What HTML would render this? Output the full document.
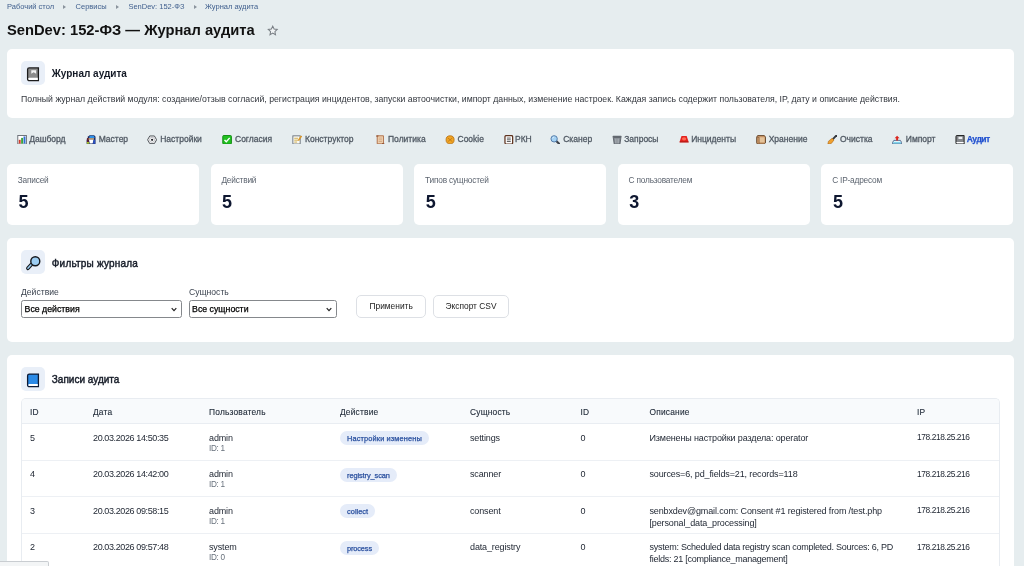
<!DOCTYPE html>
<html lang="ru"><head><meta charset="utf-8">
<title>SenDev: 152-ФЗ — Журнал аудита</title>
<style>
*{box-sizing:border-box}
html,body{margin:0;padding:0}
body{width:1024px;height:566px;overflow:hidden;background:#e6edef;font-family:"Liberation Sans",Arial,sans-serif;color:#111;position:relative}
.a{position:absolute;white-space:nowrap}
.bc{top:2px;font-size:7.5px;color:#41608e;line-height:10px}
.ar{position:absolute;top:4.5px;width:0;height:0;border-left:3px solid #8a939c;border-top:2.5px solid transparent;border-bottom:2.5px solid transparent}
h1{position:absolute;left:7px;top:20px;margin:0;font-size:14.72px;line-height:20px;font-weight:bold;color:#111;white-space:nowrap}
.star{position:absolute;left:267px;top:24.5px;width:11.5px;height:11px}
.card{position:absolute;left:7px;width:1006.5px;background:#fff;border-radius:5px}
.ic{position:absolute;left:14px;width:24px;height:24px;border-radius:5px;background:#e9eff8}
.ic svg{position:absolute;left:0;top:.5px;width:24px;height:24px}
.ct{position:absolute;left:44.8px;font-size:10px;font-weight:bold;color:#141a26;white-space:nowrap;line-height:12px}
.tab{position:absolute;top:133.3px;line-height:12px;font-size:8.5px;color:#525b65;white-space:nowrap;-webkit-text-stroke:.3px #525b65}
.ti{position:absolute;top:134.8px;width:10.2px;height:9.6px}
.st{position:absolute;top:163.7px;width:192px;height:61.3px;background:#fff;border-radius:5px}
.st .l{position:absolute;left:10.8px;top:11.5px;font-size:8.3px;line-height:11px;color:#5d6570;white-space:nowrap;letter-spacing:-.2px}
.st .v{position:absolute;left:11.5px;top:28.8px;font-size:18px;line-height:20px;font-weight:bold;color:#0e1730}
.lb{position:absolute;font-size:8.6px;line-height:11px;color:#3c4450;white-space:nowrap}
.sel{position:absolute;top:299.5px;height:18.3px;border:1px solid #85888c;border-radius:2.5px;background:#fff;font-size:8.75px;line-height:16.5px;padding-left:2.6px;color:#000;white-space:nowrap;-webkit-text-stroke:.25px #000}
.sel svg{position:absolute;right:3.5px;top:6px;width:6px;height:5px}
.btn{position:absolute;top:294.7px;height:23.2px;border:1px solid #dde0e5;border-radius:5px;background:#fff;font-size:8.4px;line-height:21.5px;text-align:center;color:#222;white-space:nowrap}
.tbl{position:absolute;left:14px;top:43.2px;width:978.5px;height:200px;border:1px solid #e8ecf1;border-radius:5px 5px 0 0;border-bottom:0;overflow:hidden}
.th{position:absolute;left:0;top:0;right:0;height:24.7px;background:#f8fafc;border-bottom:1px solid #e9edf2}
.th span{position:absolute;top:7.9px;font-size:8.4px;line-height:11px;color:#222c3a;white-space:nowrap;letter-spacing:.2px;-webkit-text-stroke:.1px #222c3a}
.tr{position:absolute;left:0;right:0;height:36.5px;border-bottom:1px solid #edf0f4}
.tr span{position:absolute;top:7.5px;font-size:9px;line-height:12px;color:#1d2430;white-space:nowrap;letter-spacing:-.13px}
.tr .s{top:19.7px;font-size:8.2px;line-height:10px;color:#68717c;letter-spacing:-.32px}
.tr .ip{font-size:8.4px;top:7.1px;letter-spacing:-.4px}
.tr .c2{letter-spacing:-.38px}
.tr .p{top:7.3px;left:318px;height:14px;border-radius:7px;background:#e5ecf9;color:#2a509f;font-size:7.4px;line-height:13.6px;padding:1.1px 7.1px 0;letter-spacing:0;-webkit-text-stroke:.25px #2a509f}
.c1{left:8px}.c2{left:71px}.c3{left:187px}.c4{left:318px}.c5{left:448px}.c6{left:558.5px}.c7{left:627.5px}.c8{left:895px}
</style></head><body>
<div id="w" style="position:absolute;left:0;top:0;width:1024px;height:566px;will-change:transform">
<div class="a bc" style="left:7px">Рабочий стол</div><i class="ar" style="left:63px"></i>
<div class="a bc" style="left:75.6px">Сервисы</div><i class="ar" style="left:116px"></i>
<div class="a bc" style="left:128.4px">SenDev: 152-ФЗ</div><i class="ar" style="left:193.5px"></i>
<div class="a bc" style="left:205px">Журнал аудита</div>
<h1>SenDev: 152-ФЗ — Журнал аудита</h1>
<svg class="star" viewBox="0 0 24 24"><path d="M12 2.5l2.9 6.3 6.8.8-5 4.7 1.3 6.8-6-3.4-6 3.4 1.3-6.8-5-4.7 6.8-.8z" fill="#f1f4f5" stroke="#777d83" stroke-width="2.2"/></svg>

<div class="card" style="top:49px;height:69.2px">
 <div class="ic" style="top:12.4px"><svg viewBox="0 0 24 24"><path d="M8.2 5.9h9.2v12.8H8.4a1.8 1.8 0 0 1-1.8-1.8V7.5a1.6 1.6 0 0 1 1.6-1.6z" fill="#8b8b8b" stroke="#1c1c1c" stroke-width="1.3"/><path d="M7.2 16.8c.2-.9.8-1.1 1.6-1.1h8v2.4h-8c-.9 0-1.5-.4-1.6-1.3z" fill="#fff"/><path d="M10.3 8.3h4.8v3.4l-2.4-1.5-2.4 1.5z" fill="#f4f4f4"/></svg></div>
 <div class="ct" style="top:18.5px">Журнал аудита</div>
 <div class="a" style="left:14px;top:45px;font-size:8.727px;line-height:11px;color:#32363d">Полный журнал действий модуля: создание/отзыв согласий, регистрация инцидентов, запуски автоочистки, импорт данных, изменение настроек. Каждая запись содержит пользователя, IP, дату и описание действия.</div>
</div>

<!-- tabs -->
<div id="tabs"><svg class="ti" style="left:17px" viewBox="0 0 10 10"><rect x=".5" y=".5" width="9" height="9" fill="#fff" stroke="#6b7078"/><rect x="1.5" y="5" width="2" height="4" fill="#d23a2a"/><rect x="4" y="3" width="2" height="6" fill="#3aa43a"/><rect x="6.5" y="1.5" width="2" height="7.5" fill="#2f6fd0"/></svg>
<div class="tab" style="left:29.2px">Дашборд</div>
<svg class="ti" style="left:85.5px" viewBox="0 0 10 10"><path d="M2.2 1.2L3.6.2h4.6l1.4 1.6v7.6H.4V5.2z" fill="#14235a"/><path d="M3.2 1.6L4 .9h3.8l.9 1.4-.3 1.1H3z" fill="#2f8fe6"/><path d="M.6 4l1.2-1.4.8.4v4.6H.6z" fill="#5e1a2e"/><rect x="2.4" y="3.4" width="5.6" height="1.5" fill="#e9b36e"/><path d="M2.8 4.9h4.9L6.6 8.8H3.6z" fill="#fff"/><path d="M7.7 4.6l1.5.6v4H6.9z" fill="#2b52c4"/><path d="M.6 7.4h2l.8 1.8H.6z" fill="#a9c62a"/></svg>
<div class="tab" style="left:98.7px">Мастер</div>
<svg class="ti" style="left:147px" viewBox="0 0 10 10"><path d="M2.6 1h4.8L9.7 5 7.4 9H2.6L.3 5z" fill="#f4f4f4" stroke="#4c5056" stroke-width="1" stroke-linejoin="round"/><circle cx="5" cy="5" r="2.6" fill="#fff" stroke="#9a9ea4" stroke-width=".6"/><circle cx="5" cy="5" r="1.2" fill="#1e2126"/></svg>
<div class="tab" style="left:160.2px">Настройки</div>
<svg class="ti" style="left:221.7px" viewBox="0 0 10 10"><rect x=".5" y=".5" width="9" height="9" rx="1" fill="#21c021" stroke="#128a12"/><path d="M2.3 5.1l1.9 1.9 3.5-4" fill="none" stroke="#fff" stroke-width="1.5"/></svg>
<div class="tab" style="left:235px">Согласия</div>
<svg class="ti" style="left:292px" viewBox="0 0 10 10"><rect x=".6" y=".9" width="7.600" height="8.500" fill="#fbfbf5" stroke="#5f6872" stroke-width=".9"/><rect x="2" y="2.900" width="4" height=".9" fill="#c9a23a"/><rect x="2" y="4.900" width="4" height=".9" fill="#c9a23a"/><rect x="2" y="6.900" width="3" height=".9" fill="#c9a23a"/><path d="M9.600.9L6.300 5.900" stroke="#d9962a" stroke-width="1.700"/></svg>
<div class="tab" style="left:305px">Конструктор</div>
<svg class="ti" style="left:375px" viewBox="0 0 10 10"><path d="M2 .8h6.5v8.4H2z" fill="#f0d2b0" stroke="#a8623a" stroke-width=".9"/><path d="M.8 1h2.4M7 9.2h2.4" stroke="#8a4a2a" stroke-width="1.2"/><path d="M3.5 3.2h3.5M3.5 5h3.5M3.5 6.8h3.5" stroke="#c89a78" stroke-width=".7"/></svg>
<div class="tab" style="left:388px">Политика</div>
<svg class="ti" style="left:445px" viewBox="0 0 10 10"><circle cx="5" cy="5" r="4.2" fill="#f2a522" stroke="#b8741a" stroke-width=".9"/><path d="M2.6 3l4.8 4M7.4 3L2.6 7" stroke="#b8741a" stroke-width=".8"/></svg>
<div class="tab" style="left:457.5px">Cookie</div>
<svg class="ti" style="left:503.7px" viewBox="0 0 10 10"><rect x=".7" y=".6" width="8" height="8.8" rx="1.2" fill="#fff" stroke="#5e321e" stroke-width="1.3"/><path d="M2.700 3.200h4M2.700 5h4M2.700 6.800h4" stroke="#444" stroke-width=".9"/></svg>
<div class="tab" style="left:515px">РКН</div>
<svg class="ti" style="left:550px" viewBox="0 0 10 10"><path d="M6.200 6.200l3 2.900" stroke="#3f444c" stroke-width="2.300" stroke-linecap="round"/><circle cx="4" cy="4" r="3.300" fill="#a5d2f4" stroke="#4f78a6" stroke-width="1"/><path d="M2.300 3.600a1.900 1.900 0 0 1 1.700-1.500" stroke="#e8f4fc" stroke-width=".8" fill="none"/></svg>
<div class="tab" style="left:563.2px">Сканер</div>
<svg class="ti" style="left:612px" viewBox="0 0 10 10"><path d="M1 2.600h8l-1 7H2z" fill="#858b92" stroke="#4d535a" stroke-width=".8" stroke-linejoin="round"/><rect x=".3" y=".8" width="9.400" height="1.900" rx=".7" fill="#62686f"/><path d="M3.500 3.800v4.800M5 3.800v4.800M6.500 3.800v4.800" stroke="#b9bec3" stroke-width=".6"/></svg>
<div class="tab" style="left:624.2px">Запросы</div>
<svg class="ti" style="left:678.7px" viewBox="0 0 10 10"><path d="M2.3 1h5.4l1.8 5.6v1.3H.5V6.6z" fill="#e3231f"/><ellipse cx="5" cy="4" rx="2.2" ry="1.7" fill="#ff6b55"/><rect x=".5" y="6.7" width="9" height="1.3" fill="#a81512"/><rect x=".6" y="8" width="8.8" height=".7" fill="#f6e4e4"/></svg>
<div class="tab" style="left:691.2px">Инциденты</div>
<svg class="ti" style="left:756.2px" viewBox="0 0 10 10"><path d="M1.4.6h7l1.2 1.6v6L8.2 9.5h-7L.4 8.2v-6z" fill="#c99768" stroke="#5c3d22" stroke-width=".9" stroke-linejoin="round"/><path d="M3 2.4h5.6v5.2H3z" fill="#e4c39a"/><path d="M.6 2.2l2.4.4M3 2.6v6.6" stroke="#7a5232" stroke-width=".6" fill="none"/></svg>
<div class="tab" style="left:768.7px">Хранение</div>
<svg class="ti" style="left:827px" viewBox="0 0 10 10"><path d="M9.300.700L5.400 4.800" stroke="#33373d" stroke-width="2" stroke-linecap="round"/><path d="M5 3.400l2 1.800-2.800 3.600L.6 9.500l.6-3z" fill="#f0a02e" stroke="#a86414" stroke-width=".6" stroke-linejoin="round"/></svg>
<div class="tab" style="left:840px">Очистка</div>
<svg class="ti" style="left:892px" viewBox="0 0 10 10"><path d="M1.6 5.6h6.8l1.3 2.2v1.4H.3V7.8z" fill="#dff4fa" stroke="#2f4a78" stroke-width=".8" stroke-linejoin="round"/><path d="M1 7.6h8v1.2H1z" fill="#59c6e6"/><path d="M5 .8l2.6 2.6H6v2.4H4V3.4H2.4z" fill="#d9261f"/></svg>
<div class="tab" style="left:905.8px">Импорт</div>
<svg class="ti" style="left:955.1px" viewBox="0 0 10 10"><path d="M1.8.5h7.4v9H1.9A1.2 1.2 0 0 1 .7 8.300V1.600A1.100 1.100 0 0 1 1.800.5z" fill="#85888c" stroke="#1c1c1c" stroke-width="1"/><path d="M1.300 7.200h7.400v1.500H1.900c-.5 0-.7-.3-.7-.800z" fill="#fff"/><path d="M3.300 1.900h4v2.300h-4z" fill="#eef0f2"/></svg>
<div class="tab" style="left:966.7px;color:#2252d0;font-weight:bold;letter-spacing:-.46px;-webkit-text-stroke:.25px #2252d0">Аудит</div></div><!--/tabs-->

<div class="st" style="left:7px"><div class="l">Записей</div><div class="v">5</div></div>
<div class="st" style="left:210.6px"><div class="l">Действий</div><div class="v">5</div></div>
<div class="st" style="left:414.2px"><div class="l">Типов сущностей</div><div class="v">5</div></div>
<div class="st" style="left:617.8px"><div class="l">С пользователем</div><div class="v">3</div></div>
<div class="st" style="left:821.4px"><div class="l">С IP-адресом</div><div class="v">5</div></div>

<div class="card" style="top:238px;height:103.8px">
 <div class="ic" style="top:12.3px"><svg viewBox="0 0 24 24"><path d="M10.6 13.2L6.9 17.3" stroke="#15181d" stroke-width="3.6" stroke-linecap="round"/><path d="M10.6 13.2L6.9 17.3" stroke="#9ccdf2" stroke-width="1.5" stroke-linecap="round"/><circle cx="14.3" cy="10.2" r="4.5" fill="#9ccdf2" stroke="#15181d" stroke-width="1.4"/></svg></div>
 <div class="ct" style="top:19.5px;font-weight:normal;letter-spacing:.2px;-webkit-text-stroke:.42px #161c28">Фильтры журнала</div>
</div>
<div class="lb" style="left:21px;top:286.5px">Действие</div>
<div class="lb" style="left:189px;top:286.5px">Сущность</div>
<div class="sel" style="left:21px;width:160.5px"><span>Все действия</span><svg viewBox="0 0 6 5"><path d="M.7 1.2L3 3.6 5.3 1.2" fill="none" stroke="#222" stroke-width="1.2"/></svg></div>
<div class="sel" style="left:188.5px;width:148px"><span>Все сущности</span><svg viewBox="0 0 6 5"><path d="M.7 1.2L3 3.6 5.3 1.2" fill="none" stroke="#222" stroke-width="1.2"/></svg></div>
<div class="btn" style="left:356.3px;width:69.7px"><span>Применить</span></div>
<div class="btn" style="left:433.2px;width:75.6px"><span>Экспорт CSV</span></div>

<div class="card" style="top:355.2px;height:230px;border-radius:5px 5px 0 0">
 <div class="ic" style="top:12.3px"><svg viewBox="0 0 24 24"><path d="M8.2 6.1h9.2v12.6H8.4a1.8 1.8 0 0 1-1.8-1.8V7.7a1.6 1.6 0 0 1 1.6-1.6z" fill="#2b8ae6" stroke="#0e1a33" stroke-width="1.3"/><path d="M7.2 17c.2-.9.8-1.1 1.6-1.1h8v2.2h-8c-.9 0-1.5-.3-1.6-1.1z" fill="#fff"/></svg></div>
 <div class="ct" style="top:19.3px;font-weight:normal;-webkit-text-stroke:.42px #161c28">Записи аудита</div>
 <div class="tbl">
  <div class="th"><span class="c1">ID</span><span class="c2">Дата</span><span class="c3">Пользователь</span><span class="c4">Действие</span><span class="c5">Сущность</span><span class="c6">ID</span><span class="c7">Описание</span><span class="c8">IP</span></div>
  <div class="tr" style="top:24.7px"><span class="c1">5</span><span class="c2">20.03.2026 14:50:35</span><span class="c3">admin</span><span class="c3 s">ID: 1</span><span class="p" style="letter-spacing:.12px">Настройки изменены</span><span class="c5">settings</span><span class="c6">0</span><span class="c7">Изменены настройки раздела: operator</span><span class="c8 ip">178.218.25.216</span></div>
  <div class="tr" style="top:61.2px"><span class="c1">4</span><span class="c2">20.03.2026 14:42:00</span><span class="c3">admin</span><span class="c3 s">ID: 1</span><span class="p" style="letter-spacing:-.1px">registry_scan</span><span class="c5">scanner</span><span class="c6">0</span><span class="c7">sources=6, pd_fields=21, records=118</span><span class="c8 ip">178.218.25.216</span></div>
  <div class="tr" style="top:97.7px"><span class="c1">3</span><span class="c2">20.03.2026 09:58:15</span><span class="c3">admin</span><span class="c3 s">ID: 1</span><span class="p">collect</span><span class="c5">consent</span><span class="c6">0</span><span class="c7">senbxdev@gmail.com: Consent #1 registered from /test.php<br>[personal_data_processing]</span><span class="c8 ip">178.218.25.216</span></div>
  <div class="tr" style="top:134.2px"><span class="c1">2</span><span class="c2">20.03.2026 09:57:48</span><span class="c3">system</span><span class="c3 s">ID: 0</span><span class="p" style="letter-spacing:-.15px">process</span><span class="c5">data_registry</span><span class="c6">0</span><span class="c7" style="letter-spacing:-.25px">system: Scheduled data registry scan completed. Sources: 6, PD<br>fields: 21 [compliance_management]</span><span class="c8 ip">178.218.25.216</span></div>
 </div>
</div>
<div style="position:absolute;left:0;top:561px;width:48.5px;height:6px;background:#f3f5f6;border:1px solid #c9cdd1;border-left:0;border-radius:0 2px 0 0"></div>
</div>
</body></html>
